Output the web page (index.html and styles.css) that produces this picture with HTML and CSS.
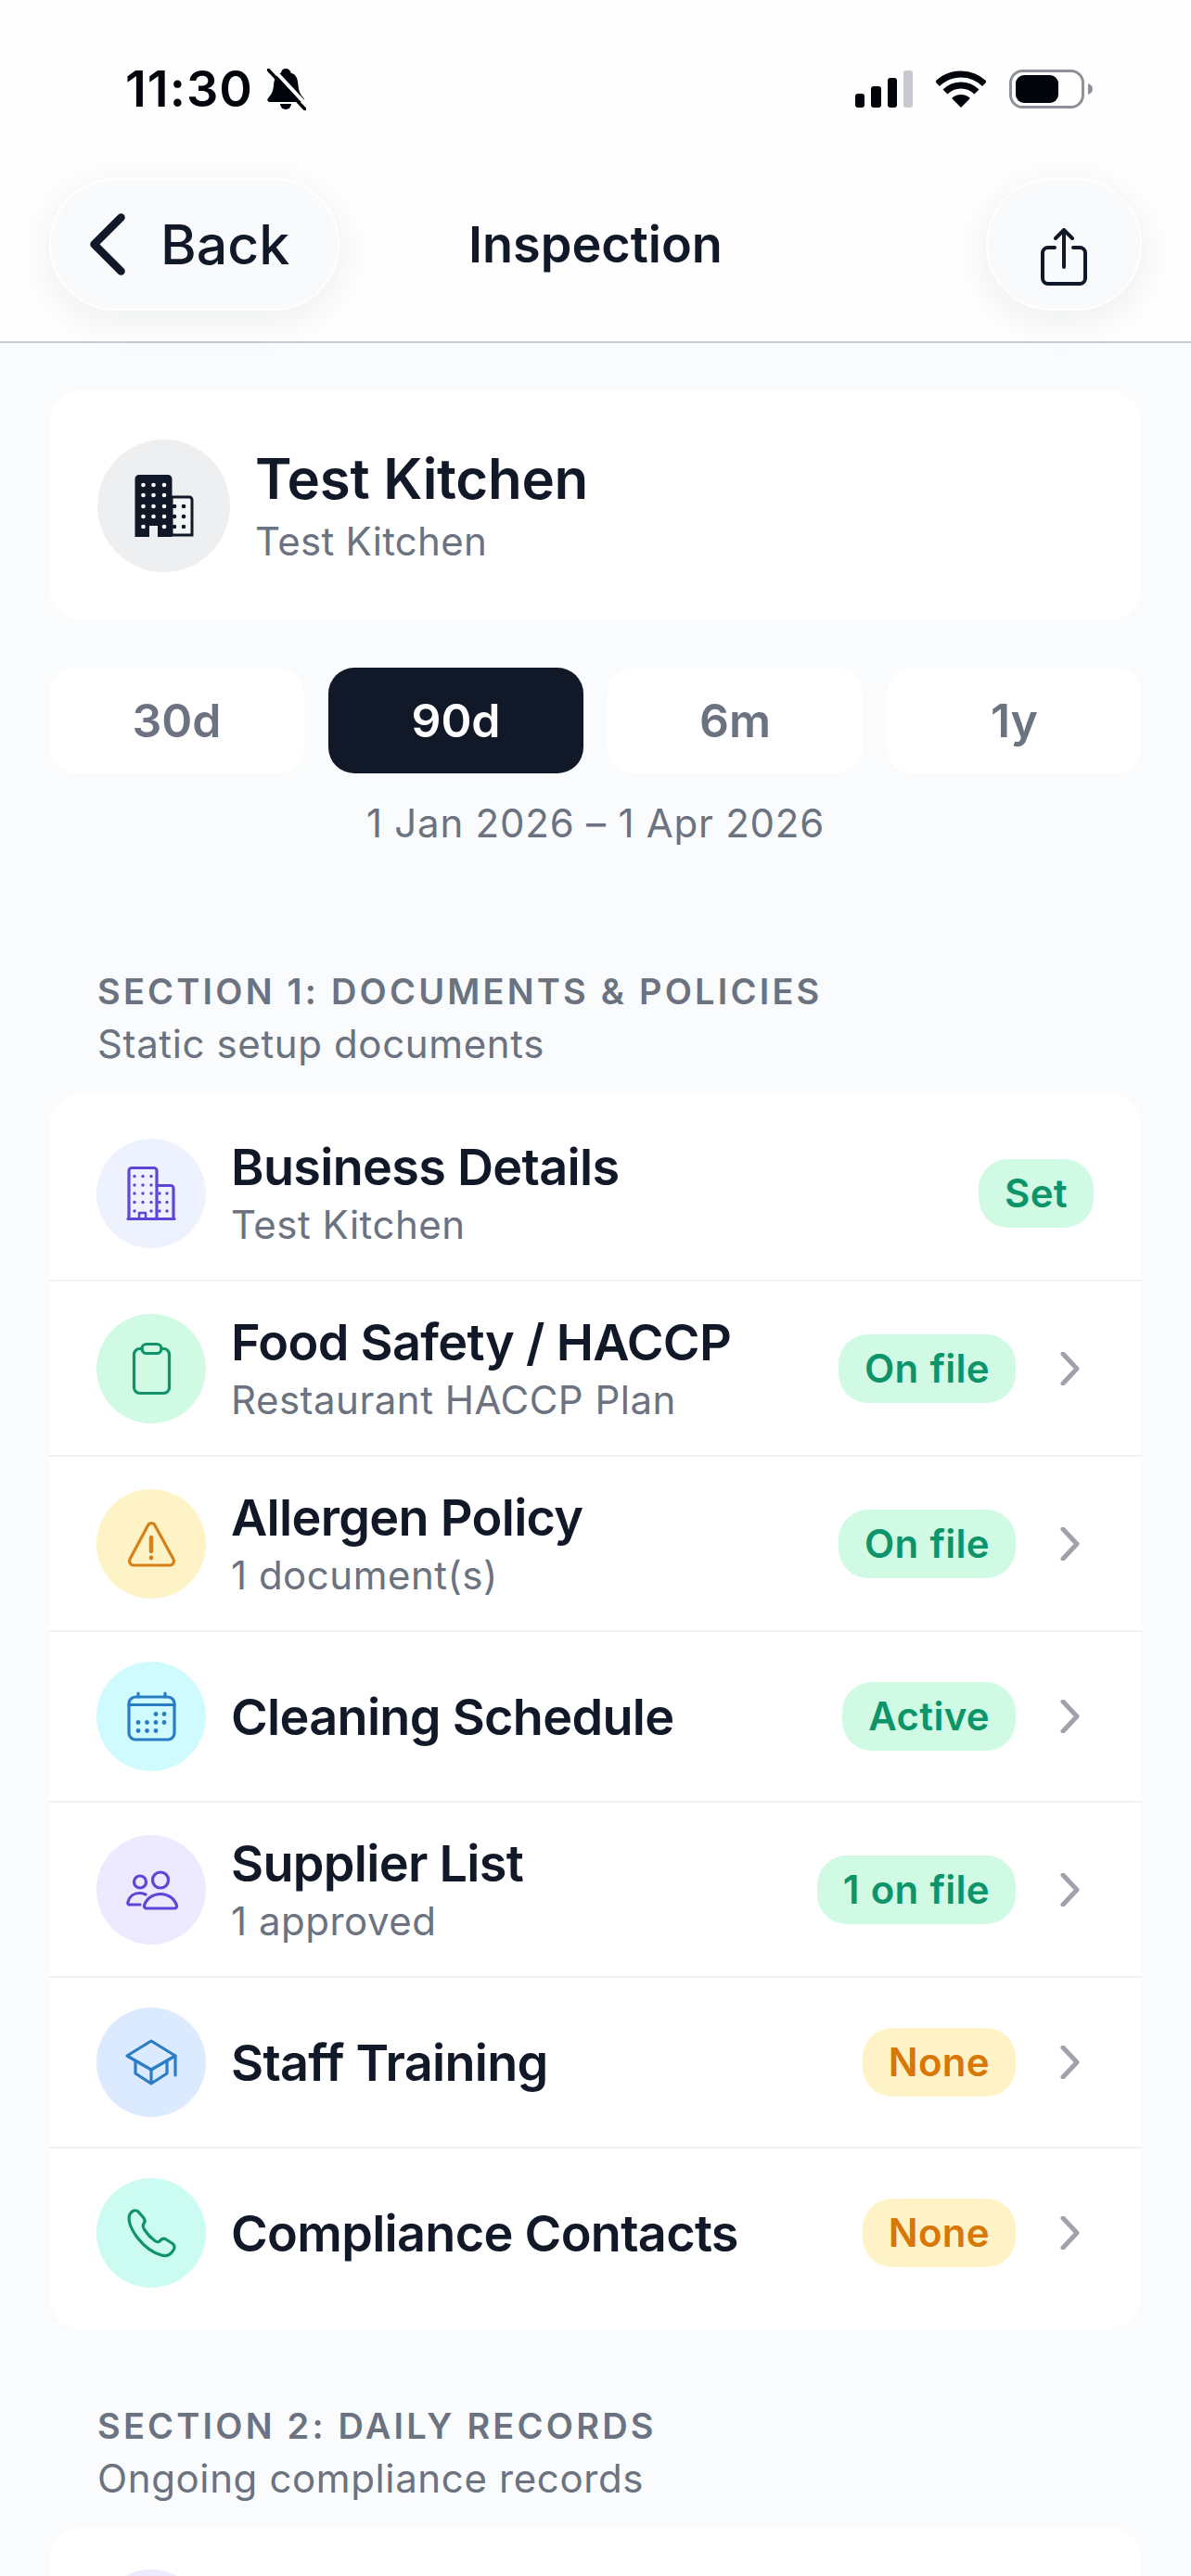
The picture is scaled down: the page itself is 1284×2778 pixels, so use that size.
FILE: index.html
```html
<!DOCTYPE html>
<html lang="en">
<head>
  <meta charset="UTF-8">
  <title>Inspection</title>
  <link rel="stylesheet" href="styles.css">
</head>
<body>

  <header class="top">
    <div class="status">
      <div class="status-left">
        <span class="time">11:30</span>
        <svg class="bell" width="42" height="45" viewBox="0 0 42 45">
          <path d="M20 0c3 0 5 2 5.500 4.500C32 6.500 33 12 33.500 18c.5 6 2 9.500 6 14 1.500 2 .5 4-2 4H3c-2.500 0-3.500-2-2-4 4-4.500 5.500-8 6-14C7.500 12 9 6.500 15 4.500 15.500 2 17 0 20 0z" fill="#02040c"/>
          <path d="M14 38h12a6 6 0 0 1-12 0z" fill="#02040c"/>
          <path d="M5 -1L45 42" stroke="#fff" stroke-width="4"/>
          <path d="M1 1L41 44" stroke="#02040c" stroke-width="3.500" stroke-linecap="round"/>
        </svg>
      </div>
      <div class="status-right">
        <svg width="62" height="40" viewBox="0 0 62 40">
          <rect x="0" y="25" width="10" height="15" rx="3" fill="#02040c"/>
          <rect x="17" y="17" width="11" height="23" rx="3" fill="#02040c"/>
          <rect x="35" y="8" width="10" height="32" rx="3" fill="#02040c"/>
          <rect x="52" y="0" width="10" height="40" rx="3" fill="#c7c9ce"/>
        </svg>
        <svg width="54" height="40" viewBox="0 0 54 40">
          <path d="M1.500 14.500A36 36 0 0 1 52.500 14.500" fill="none" stroke="#02040c" stroke-width="7"/>
          <path d="M10 23A24 24 0 0 1 44 23" fill="none" stroke="#02040c" stroke-width="7"/>
          <path d="M27 40L17.100 30.100A14 14 0 0 1 36.900 30.100Z" fill="#02040c"/>
        </svg>
        <svg width="90" height="42" viewBox="0 0 90 42">
          <rect x="1.500" y="1.500" width="78" height="39" rx="13" fill="none" stroke="#8e9197" stroke-width="3"/>
          <rect x="7" y="6" width="46" height="30" rx="9" fill="#02040c"/>
          <path d="M85 15c3 1 5 3 5 6s-2 5-5 6z" fill="#8e9197"/>
        </svg>
      </div>
    </div>

    <nav class="nav">
      <button class="nav-btn back">
        <svg width="38" height="67" viewBox="0 0 38 67">
          <path d="M33.500 4.500L4.500 33.500L33.500 62.500" fill="none" stroke="#111827" stroke-width="8.500" stroke-linecap="round" stroke-linejoin="round"/>
        </svg>
        <span>Back</span>
      </button>
      <h1 class="nav-title">Inspection</h1>
      <button class="nav-btn share">
        <svg width="50" height="62" viewBox="0 0 50 62">
          <path d="M15 21H8a6 6 0 0 0-6 6v27a6 6 0 0 0 6 6h34a6 6 0 0 0 6-6V27a6 6 0 0 0-6-6h-7" fill="none" stroke="#111827" stroke-width="4" stroke-linecap="round"/>
          <path d="M25 42V2M16 11L25 2l9 9" fill="none" stroke="#111827" stroke-width="4" stroke-linecap="round" stroke-linejoin="round"/>
        </svg>
      </button>
    </nav>
  </header>

  <main class="page">

    <div class="venue">
      <div class="venue-icon">
        <svg width="72" height="72" viewBox="0 0 72 72">
          <path d="M44 27h19a3 3 0 0 1 3 3v38H44z" fill="#f4f5f6" stroke="#111827" stroke-width="3"/>
          <path d="M9 3h31a4.500 4.500 0 0 1 4.500 4.500V70H29V58h-9v12H4.500V7.500A4.500 4.500 0 0 1 9 3z" fill="#111827"/>
          <g fill="#fff">
            <circle cx="13.500" cy="14" r="2.300"/><circle cx="24.500" cy="14" r="2.300"/><circle cx="36" cy="14" r="2.300"/>
            <circle cx="13.500" cy="25" r="2.300"/><circle cx="24.500" cy="25" r="2.300"/><circle cx="36" cy="25" r="2.300"/>
            <circle cx="13.500" cy="37" r="2.300"/><circle cx="24.500" cy="37" r="2.300"/><circle cx="36" cy="37" r="2.300"/>
            <circle cx="13.500" cy="48" r="2.300"/><circle cx="24.500" cy="48" r="2.300"/><circle cx="36" cy="48" r="2.300"/>
            <circle cx="13.500" cy="59" r="2.300"/><circle cx="36" cy="59" r="2.300"/>
          </g>
          <g fill="#111827">
            <circle cx="47" cy="37" r="2.300"/><circle cx="57" cy="37" r="2.300"/>
            <circle cx="47" cy="48" r="2.300"/><circle cx="57" cy="48" r="2.300"/>
            <circle cx="47" cy="59" r="2.300"/><circle cx="57" cy="59" r="2.300"/>
          </g>
        </svg>
      </div>
      <div>
        <div class="venue-name">Test Kitchen</div>
        <div class="venue-sub">Test Kitchen</div>
      </div>
    </div>

    <div class="ranges">
      <div class="range">30d</div>
      <div class="range active">90d</div>
      <div class="range">6m</div>
      <div class="range">1y</div>
    </div>
    <div class="date-span">1 Jan 2026 – 1 Apr 2026</div>

    <section class="section first">
      <h2 class="section-title">Section 1: Documents &amp; Policies</h2>
      <p class="section-sub">Static setup documents</p>
    </section>

    <div class="list">

      <div class="row">
        <div class="icon c-indigo">
          <svg class="ic" viewBox="0 0 64 64">
            <path d="M8 59.500V7.500a3 3 0 0 1 3-3h24a3 3 0 0 1 3 3v52"/>
            <path d="M38 23.500h15a3 3 0 0 1 3 3v33"/>
            <path d="M7 59.500h50"/>
            <path d="M19 59v-6h7v6" stroke-width="2.500"/>
            <g class="dots">
              <circle cx="14" cy="13.500" r="1.700"/><circle cx="23" cy="13.500" r="1.700"/><circle cx="32" cy="13.500" r="1.700"/>
              <circle cx="14" cy="23" r="1.700"/><circle cx="23" cy="23" r="1.700"/><circle cx="32" cy="23" r="1.700"/>
              <circle cx="14" cy="32" r="1.700"/><circle cx="23" cy="32" r="1.700"/><circle cx="32" cy="32" r="1.700"/>
              <circle cx="14" cy="41.500" r="1.700"/><circle cx="23" cy="41.500" r="1.700"/><circle cx="32" cy="41.500" r="1.700"/>
              <circle cx="14" cy="51" r="1.700"/><circle cx="32" cy="51" r="1.700"/>
              <circle cx="41" cy="32" r="1.700"/><circle cx="49" cy="32" r="1.700"/>
              <circle cx="41" cy="41.500" r="1.700"/><circle cx="49" cy="41.500" r="1.700"/>
              <circle cx="41" cy="51" r="1.700"/><circle cx="49" cy="51" r="1.700"/>
            </g>
          </svg>
        </div>
        <div class="row-text">
          <div class="row-title">Business Details</div>
          <div class="row-sub">Test Kitchen</div>
        </div>
        <span class="pill good">Set</span>
      </div>

      <div class="row">
        <div class="icon c-green">
          <svg class="ic" viewBox="0 0 64 64">
            <path d="M22 10.500h-2.500a6 6 0 0 0-6 6v36a6 6 0 0 0 6 6h26a6 6 0 0 0 6-6v-36a6 6 0 0 0-6-6H43"/>
            <rect x="22" y="5.500" width="21" height="10" rx="5"/>
          </svg>
        </div>
        <div class="row-text">
          <div class="row-title">Food Safety / HACCP</div>
          <div class="row-sub">Restaurant HACCP Plan</div>
        </div>
        <span class="pill good">On file</span>
        <svg class="chev" width="36" height="36" viewBox="0 0 36 36"><path d="M3 2L18 18L3 34"/></svg>
      </div>

      <div class="row">
        <div class="icon c-amber">
          <svg class="ic" viewBox="0 0 64 64">
            <path d="M28.500 12L9 48.500a4.500 4.500 0 0 0 4 6.500h39a4.500 4.500 0 0 0 4-6.500L36 12a4.200 4.200 0 0 0-7.500 0z"/>
            <path d="M32 25v15" stroke-width="4.500"/>
            <circle class="dots" cx="32" cy="47" r="2.400"/>
          </svg>
        </div>
        <div class="row-text">
          <div class="row-title">Allergen Policy</div>
          <div class="row-sub">1 document(s)</div>
        </div>
        <span class="pill good">On file</span>
        <svg class="chev" width="36" height="36" viewBox="0 0 36 36"><path d="M3 2L18 18L3 34"/></svg>
      </div>

      <div class="row">
        <div class="icon c-cyan">
          <svg class="ic" viewBox="0 0 64 64">
            <rect x="8" y="11" width="49" height="46" rx="7"/>
            <path d="M8 19.500h49M18 7v4M47 7v4"/>
            <g class="dots">
              <circle cx="37" cy="29.500" r="2.400"/><circle cx="46" cy="29.500" r="2.400"/>
              <circle cx="18" cy="38.500" r="2.400"/><circle cx="27.500" cy="38.500" r="2.400"/><circle cx="37" cy="38.500" r="2.400"/><circle cx="46" cy="38.500" r="2.400"/>
              <circle cx="18" cy="47.500" r="2.400"/><circle cx="27.500" cy="47.500" r="2.400"/><circle cx="37" cy="47.500" r="2.400"/>
            </g>
          </svg>
        </div>
        <div class="row-text">
          <div class="row-title">Cleaning Schedule</div>
        </div>
        <span class="pill good">Active</span>
        <svg class="chev" width="36" height="36" viewBox="0 0 36 36"><path d="M3 2L18 18L3 34"/></svg>
      </div>

      <div class="row">
        <div class="icon c-violet">
          <svg class="ic" viewBox="0 0 64 64">
            <circle cx="42" cy="21.500" r="8.500"/>
            <circle cx="20" cy="23.500" r="6.500"/>
            <path d="M27 52h30a2.500 2.500 0 0 0 2.500-3C57 41 50 36.500 42 36.500S27 41 24.500 49a2.500 2.500 0 0 0 2.500 3z"/>
            <path d="M26 37c-2-1-4-1.500-6.500-1.500-6 0-11 3.500-12.500 9.500a2 2 0 0 0 2 3h11"/>
          </svg>
        </div>
        <div class="row-text">
          <div class="row-title">Supplier List</div>
          <div class="row-sub">1 approved</div>
        </div>
        <span class="pill good">1 on file</span>
        <svg class="chev" width="36" height="36" viewBox="0 0 36 36"><path d="M3 2L18 18L3 34"/></svg>
      </div>

      <div class="row">
        <div class="icon c-blue">
          <svg class="ic" viewBox="0 0 64 64">
            <path d="M32 9L6 25l26 15 26-15z"/>
            <path d="M15 31v13l17 11 17-11V31M32 40v15M58 25v21"/>
          </svg>
        </div>
        <div class="row-text">
          <div class="row-title">Staff Training</div>
        </div>
        <span class="pill warn">None</span>
        <svg class="chev" width="36" height="36" viewBox="0 0 36 36"><path d="M3 2L18 18L3 34"/></svg>
      </div>

      <div class="row">
        <div class="icon c-teal">
          <svg class="ic" viewBox="0 0 64 64">
            <path d="M9 12C11 8 15 6.500 18 9l6 7c2 2.500 1.500 4 0 6-1.500 2-1 4 1 7 3 4.500 6 8 11 11.500 3 2 4 1.500 6-.5 2-2 3.500-2.500 6-1l7 4.500c3 2.500 2.500 5.500 0 8.500-3 4-7 5.500-12 4-9-2.500-19-10-26-19C12 30 6 19 9 12z"/>
          </svg>
        </div>
        <div class="row-text">
          <div class="row-title">Compliance Contacts</div>
        </div>
        <span class="pill warn">None</span>
        <svg class="chev" width="36" height="36" viewBox="0 0 36 36"><path d="M3 2L18 18L3 34"/></svg>
      </div>

    </div>

    <section class="section">
      <h2 class="section-title">Section 2: Daily Records</h2>
      <p class="section-sub">Ongoing compliance records</p>
    </section>

    <div class="list">
      <div class="row">
        <div class="icon c-violet"></div>
      </div>
    </div>

  </main>
</body>
</html>
```

FILE: styles.css
```css
html, body {
  margin: 0;
  height: 2778px;
  overflow: hidden;
}
body {
  font-family: 'Inter', 'Liberation Sans', sans-serif;
  background: #fafbfd;
  color: #111827;
}

/* top bar */
.top {
  position: relative;
  z-index: 2;
  background: #fefefe;
  padding: 73px 53px 33px;
  border-bottom: 2px solid #c9cbd2;
}
.status {
  display: flex;
  justify-content: space-between;
  align-items: center;
  height: 46px;
  padding: 0 53px 0 82px;
}
.status-left {
  display: flex;
  align-items: center;
  gap: 15px;
}
.time {
  font-size: 54px;
  font-weight: 600;
  line-height: 46px;
  letter-spacing: 1px;
  color: #02040c;
}
.status-right {
  display: flex;
  align-items: center;
  gap: 25px;
}
.nav {
  display: grid;
  grid-template-columns: 1fr auto 1fr;
  align-items: center;
  margin-top: 73px;
}
.nav-btn {
  height: 143px;
  display: flex;
  align-items: center;
  background: #f9fafb;
  border: 2px solid #fff;
  border-radius: 72px;
  box-shadow: 0 10px 44px rgba(17, 24, 39, 0.07);
  color: #111827;
  font-family: inherit;
  padding: 0;
}
.back {
  width: 313px;
  gap: 38px;
  padding-left: 42px;
  font-size: 59px;
  font-weight: 500;
}
.share {
  width: 168px;
  justify-content: center;
  justify-self: end;
  padding-top: 26px;
}
.nav-title {
  margin: 0;
  font-size: 54px;
  font-weight: 600;
}

/* page */
.page {
  padding: 51px 53px 0;
}
.venue {
  display: flex;
  align-items: center;
  gap: 27px;
  height: 248px;
  padding-left: 52px;
  box-sizing: border-box;
  background: #fff;
  border-radius: 36px;
}
.venue-icon {
  width: 143px;
  height: 143px;
  border-radius: 50%;
  background: #eeeff1;
  display: flex;
  align-items: center;
  justify-content: center;
}
.venue-name {
  font-size: 60px;
  font-weight: 600;
  line-height: 72px;
  letter-spacing: -0.3px;
}
.venue-sub {
  margin-top: 6px;
  font-size: 42px;
  line-height: 52px;
  letter-spacing: 0.3px;
  color: #6b7280;
}
.ranges {
  display: grid;
  grid-template-columns: repeat(4, 1fr);
  gap: 26px;
  margin-top: 51px;
}
.range {
  height: 114px;
  line-height: 114px;
  text-align: center;
  background: #fff;
  border-radius: 28px;
  font-size: 50px;
  font-weight: 600;
  color: #6b7280;
}
.range.active {
  background: #111827;
  color: #fff;
}
.date-span {
  margin-top: 26px;
  text-align: center;
  font-size: 42px;
  line-height: 56px;
  letter-spacing: 0.77px;
  color: #6b7280;
}

/* sections */
.section {
  margin: 80px 0 24px;
  padding-left: 52px;
}
.section.first {
  margin: 129px 0 25px;
}
.section-title {
  margin: 0;
  font-size: 38px;
  font-weight: 600;
  line-height: 48px;
  letter-spacing: 3.2px;
  text-transform: uppercase;
  color: #6b7280;
}
.section-sub {
  margin: 5px 0 0;
  font-size: 42px;
  line-height: 56px;
  letter-spacing: 0.62px;
  color: #6b7280;
}

/* list rows */
.list {
  background: #fff;
  border-radius: 36px;
  padding: 14px 0 13px;
}
.row {
  display: flex;
  align-items: center;
  padding: 32px 52px 32px 51px;
  border-bottom: 2px solid #f1f2f4;
}
.row:last-child { border-bottom: none; }
.icon {
  flex: none;
  width: 118px;
  height: 118px;
  border-radius: 50%;
  display: flex;
  align-items: center;
  justify-content: center;
}
.c-indigo { background: #eef2ff; color: #5f46d6; }
.c-green  { background: #d1fae5; color: #10936b; }
.c-amber  { background: #fef3c7; color: #d6801a; }
.c-cyan   { background: #cffafe; color: #2a7cc4; }
.c-violet { background: #ede9fe; color: #5f46d6; }
.c-blue   { background: #dbeafe; color: #2a7cc4; }
.c-teal   { background: #ccfbf1; color: #10936b; }
.ic {
  width: 64px;
  height: 64px;
  fill: none;
  stroke: currentColor;
  stroke-width: 3.2;
  stroke-linecap: round;
  stroke-linejoin: round;
}
.ic .dots, .ic circle.dots {
  fill: currentColor;
  stroke: none;
}
.row-text {
  flex: 1;
  margin-left: 27px;
}
.row-title {
  font-size: 54px;
  font-weight: 600;
  line-height: 67px;
  letter-spacing: -0.7px;
}
.row-sub {
  margin-top: 1px;
  font-size: 42px;
  line-height: 55px;
  letter-spacing: 0.5px;
  color: #6b7280;
}
.pill {
  flex: none;
  height: 74px;
  line-height: 74px;
  padding: 0 28px;
  border-radius: 32px;
  font-size: 42px;
  font-weight: 600;
  letter-spacing: 0.3px;
  word-spacing: 1px;
}
.pill.good { background: #d1fae5; color: #0d9469; }
.pill.warn { background: #fef3c7; color: #d97706; }
.chev {
  flex: none;
  margin-left: 48px;
  fill: none;
  stroke: #a0a2ab;
  stroke-width: 5;
  stroke-linecap: round;
  stroke-linejoin: round;
}
```
